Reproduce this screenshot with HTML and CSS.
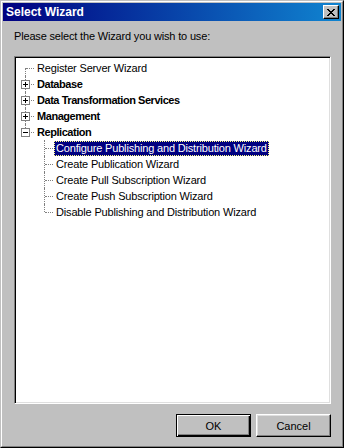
FILE: index.html
```html
<!DOCTYPE html>
<html>
<head>
<meta charset="utf-8">
<link rel="stylesheet" href="styles.css">
</head>
<body>
<div class="window">
  <div class="frame">
    <div class="titlebar">
      <span class="title">Select Wizard</span>
      <div class="close">
        <svg width="8" height="7" viewBox="0 0 8 7" shape-rendering="crispEdges">
          <path fill="#000" d="M0 0h2v1h-2zM6 0h2v1h-2zM1 1h2v1h-2zM5 1h2v1h-2zM2 2h4v1h-4zM3 3h2v1h-2zM2 4h4v1h-4zM1 5h2v1h-2zM5 5h2v1h-2zM0 6h2v1h-2zM6 6h2v1h-2z"/>
        </svg>
      </div>
    </div>
    <div class="content">
      <div class="prompt">Please select the Wizard you wish to use:</div>
      <div class="tree">
        <div class="row">
          <div class="cell line first branch"></div>
          <span class="label">Register Server Wizard</span>
        </div>
        <div class="row">
          <div class="cell line branch">
            <svg class="exp" width="9" height="9" viewBox="0 0 9 9" shape-rendering="crispEdges"><rect x="0.5" y="0.5" width="8" height="8" fill="#fff" stroke="#808080"/><path d="M2 4h5v1h-5zM4 2h1v5h-1z" fill="#000"/></svg>
          </div>
          <span class="label bold">Database</span>
        </div>
        <div class="row">
          <div class="cell line branch">
            <svg class="exp" width="9" height="9" viewBox="0 0 9 9" shape-rendering="crispEdges"><rect x="0.5" y="0.5" width="8" height="8" fill="#fff" stroke="#808080"/><path d="M2 4h5v1h-5zM4 2h1v5h-1z" fill="#000"/></svg>
          </div>
          <span class="label bold">Data Transformation Services</span>
        </div>
        <div class="row">
          <div class="cell line branch">
            <svg class="exp" width="9" height="9" viewBox="0 0 9 9" shape-rendering="crispEdges"><rect x="0.5" y="0.5" width="8" height="8" fill="#fff" stroke="#808080"/><path d="M2 4h5v1h-5zM4 2h1v5h-1z" fill="#000"/></svg>
          </div>
          <span class="label bold">Management</span>
        </div>
        <div class="row">
          <div class="cell line last branch">
            <svg class="exp" width="9" height="9" viewBox="0 0 9 9" shape-rendering="crispEdges"><rect x="0.5" y="0.5" width="8" height="8" fill="#fff" stroke="#808080"/><path d="M2 4h5v1h-5z" fill="#000"/></svg>
          </div>
          <span class="label bold">Replication</span>
        </div>
        <div class="row">
          <div class="cell"></div>
          <div class="cell line branch"></div>
          <span class="label selected">Configure Publishing and Distribution Wizard</span>
        </div>
        <div class="row">
          <div class="cell"></div>
          <div class="cell line branch"></div>
          <span class="label">Create Publication Wizard</span>
        </div>
        <div class="row">
          <div class="cell"></div>
          <div class="cell line branch"></div>
          <span class="label">Create Pull Subscription Wizard</span>
        </div>
        <div class="row">
          <div class="cell"></div>
          <div class="cell line branch"></div>
          <span class="label">Create Push Subscription Wizard</span>
        </div>
        <div class="row">
          <div class="cell"></div>
          <div class="cell line last branch"></div>
          <span class="label">Disable Publishing and Distribution Wizard</span>
        </div>
      </div>
      <div class="buttons">
        <button class="btn default">OK</button>
        <button class="btn">Cancel</button>
      </div>
    </div>
  </div>
</div>
</body>
</html>
```

FILE: styles.css
```css
html, body {
  margin: 0;
  padding: 0;
  background: #c0c0c0;
}

body {
  font-family: "Liberation Sans", Arial, sans-serif;
  font-size: 11px;
  color: #000;
}

.window {
  width: 344px;
  height: 448px;
  box-sizing: border-box;
  border: 1px solid;
  border-color: #c0c0c0 #000 #000 #c0c0c0;
  background: #c0c0c0;
}

.frame {
  height: 100%;
  box-sizing: border-box;
  border: 1px solid;
  border-color: #fff #808080 #808080 #fff;
  padding: 1px;
  display: flex;
  flex-direction: column;
}

.titlebar {
  height: 18px;
  flex: none;
  background: linear-gradient(to right, #000080, #1084d0);
  display: flex;
  align-items: center;
  justify-content: space-between;
  padding: 0 2px 0 3px;
}

.title {
  color: #fff;
  font-weight: bold;
  font-size: 12px;
  line-height: 18px;
}

.close {
  width: 16px;
  height: 14px;
  box-sizing: border-box;
  background: #c0c0c0;
  border: 1px solid;
  border-color: #fff #000 #000 #fff;
  box-shadow: inset -1px -1px #808080;
  display: flex;
  align-items: center;
  justify-content: center;
  padding-right: 1px;
}

.close svg {
  display: block;
}

.content {
  flex: 1;
  display: flex;
  flex-direction: column;
  padding: 9px 10px 8px 11px;
  min-height: 0;
}

.prompt {
  line-height: 13px;
  height: 13px;
  margin-bottom: 13px;
  letter-spacing: -0.17px;
}

.tree {
  flex: 1;
  background: #fff;
  border: 1px solid;
  border-color: #808080 #fff #fff #808080;
  box-shadow: inset 1px 1px #000, inset -1px -1px #dfdfdf;
  padding: 3px 1px 0 1px;
}

.row {
  display: flex;
  align-items: center;
  height: 16px;
}

.cell {
  width: 19px;
  height: 16px;
  flex: none;
  position: relative;
}

.cell.line::before {
  content: "";
  position: absolute;
  left: 9px;
  top: 0;
  bottom: 0;
  border-left: 1px dotted #808080;
}

.cell.first::before {
  top: 8px;
}

.cell.last::before {
  bottom: 8px;
}

.cell.branch::after {
  content: "";
  position: absolute;
  left: 10px;
  top: 8px;
  width: 8px;
  border-top: 1px dotted #808080;
}

.exp {
  position: absolute;
  left: 5px;
  top: 4px;
  z-index: 1;
  display: block;
}

.label {
  white-space: nowrap;
  line-height: 13px;
  padding: 1px 2px;
  letter-spacing: -0.17px;
}

.label.bold {
  font-weight: bold;
  letter-spacing: -0.45px;
}

.label.selected {
  background: #000080;
  color: #fff;
  outline: 1px dotted #ffff80;
  outline-offset: -1px;
}

.buttons {
  display: flex;
  justify-content: flex-end;
  gap: 5px;
  margin-top: 10px;
}

.btn {
  width: 75px;
  height: 23px;
  box-sizing: border-box;
  font-family: "Liberation Sans", Arial, sans-serif;
  font-size: 11px;
  color: #000;
  background: #c0c0c0;
  border: 1px solid;
  border-color: #fff #000 #000 #fff;
  box-shadow: inset -1px -1px #808080, inset 1px 1px #dfdfdf;
  padding: 0;
}

.btn.default {
  border: 1px solid #000;
  box-shadow: inset 1px 1px #fff, inset -1px -1px #000, inset -2px -2px #808080;
}
```
